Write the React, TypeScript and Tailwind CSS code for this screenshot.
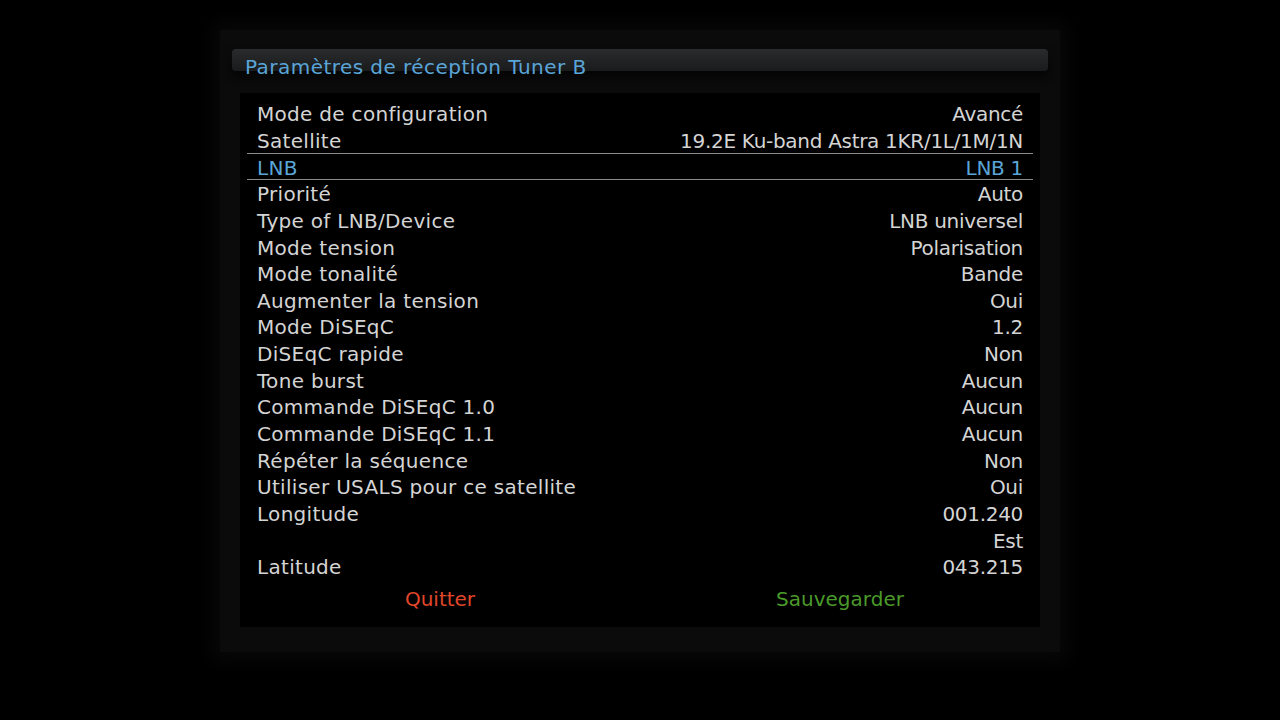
import React from "react";

const rows: [string, string][] = [
  ["Mode de configuration", "Avancé"],
  ["Satellite", "19.2E Ku-band Astra 1KR/1L/1M/1N"],
  ["LNB", "LNB 1"],
  ["Priorité", "Auto"],
  ["Type of LNB/Device", "LNB universel"],
  ["Mode tension", "Polarisation"],
  ["Mode tonalité", "Bande"],
  ["Augmenter la tension", "Oui"],
  ["Mode DiSEqC", "1.2"],
  ["DiSEqC rapide", "Non"],
  ["Tone burst", "Aucun"],
  ["Commande DiSEqC 1.0", "Aucun"],
  ["Commande DiSEqC 1.1", "Aucun"],
  ["Répéter la séquence", "Non"],
  ["Utiliser USALS pour ce satellite", "Oui"],
  ["Longitude", "001.240"],
  ["", "Est"],
  ["Latitude", "043.215"],
];

export default function App() {
  return (
    <div
      className="w-[1280px] h-[720px] bg-black flex justify-center pt-[30px]"
      style={{ fontFamily: '"DejaVu Sans", Verdana, sans-serif' }}
    >
      <div className="w-[840px] h-[622px] bg-[#0b0b0b] shadow-[0_0_18px_8px_#080808] px-[12px] pt-[19px] flex flex-col">
        <div className="h-[22px] rounded-[4px] bg-gradient-to-b from-[#2a2b2d] to-[#1a1b1d] shadow-[0_6px_10px_#050505] pl-[13px] text-[20px] text-[#5aa5d8] leading-none">
          <div className="pt-[8px] tracking-[0.45px]">Paramètres de réception Tuner B</div>
        </div>
        <div className="mx-[8px] mt-[22px] h-[534px] bg-black px-[7px] pt-[7px] flex flex-col text-[20px] text-[#d4d4d4]">
          {rows.map(([l, v], i) => {
            const sel = l === "LNB";
            return (
              <div
                key={i}
                className={
                  "h-[26.65px] flex items-center justify-between px-[10px] leading-none " +
                  (sel ? "border-y border-[#8a8a8a] text-[#5aa5d8]" : "")
                }
              >
                <span className="pt-[2px] tracking-[0.3px]">{l}</span>
                <span className="pt-[2px] tracking-[-0.3px]">{v}</span>
              </div>
            );
          })}
          <div className="flex mt-[6px] h-[26px] items-center">
            <div className="flex-1 text-center text-[#e0462a] -ml-[7px]">Quitter</div>
            <div className="flex-1 text-center text-[#4a9a2a] -mr-[7px]">Sauvegarder</div>
          </div>
        </div>
      </div>
    </div>
  );
}
